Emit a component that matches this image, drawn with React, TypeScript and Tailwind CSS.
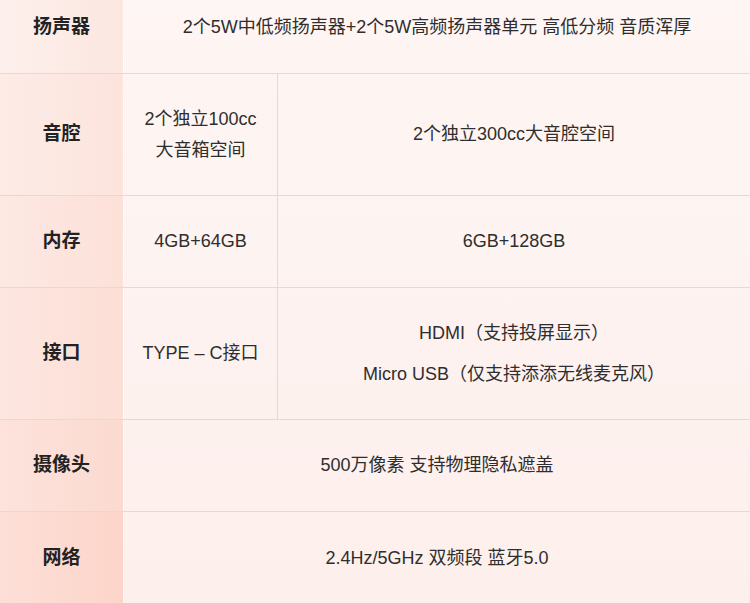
const font = { fontFamily: '"Liberation Sans", "Noto Sans CJK SC", sans-serif' };

function Label({ text, bg }: { text: string; bg: string }) {
  return (
    <div className={`flex items-center justify-center border-r border-r-white/70 text-[19px] font-bold text-[#222] ${bg}`}>
      {text}
    </div>
  );
}

export default function App() {
  return (
    <div className="h-[603px] w-[750px] overflow-hidden bg-gradient-to-b from-[#fef6f4] to-[#fdefec] text-[#2e2e2e]" style={font}>
      <div className="-mt-[19px] flex flex-col">
        {/* 扬声器 */}
        <div className="grid h-[93px] grid-cols-[124px_1fr] border-b border-[#e8d8cf]">
          <Label text="扬声器" bg="bg-gradient-to-r from-[#fdf0ec] to-[#fce6e0]" />
          <div className="flex items-center justify-center text-[18px]">
            2个5W中低频扬声器+2个5W高频扬声器单元 高低分频 音质浑厚
          </div>
        </div>

        {/* 音腔 */}
        <div className="grid h-[122px] grid-cols-[124px_154px_1fr] border-b border-[#e8d8cf]">
          <Label text="音腔" bg="bg-gradient-to-r from-[#fdebe6] to-[#fce4dd]" />
          <div className="flex flex-col items-center justify-center border-r border-[#e8d8cf] text-[18px] leading-[31px]">
            <span>2个独立100cc</span>
            <span>大音箱空间</span>
          </div>
          <div className="flex items-center justify-center text-[18px]">2个独立300cc大音腔空间</div>
        </div>

        {/* 内存 */}
        <div className="grid h-[92px] grid-cols-[124px_154px_1fr] border-b border-[#e8d8cf]">
          <Label text="内存" bg="bg-gradient-to-r from-[#fde8e2] to-[#fce1d9]" />
          <div className="flex items-center justify-center border-r border-[#e8d8cf] text-[18px]">4GB+64GB</div>
          <div className="flex items-center justify-center text-[18px]">6GB+128GB</div>
        </div>

        {/* 接口 */}
        <div className="grid h-[132px] grid-cols-[124px_154px_1fr] border-b border-[#e8d8cf]">
          <Label text="接口" bg="bg-gradient-to-r from-[#fde6e0] to-[#fcdfd6]" />
          <div className="flex items-center justify-center border-r border-[#e8d8cf] text-[18px]">TYPE – C接口</div>
          <div className="flex flex-col items-center justify-center gap-[15px] text-[18px] leading-[26px]">
            <span>HDMI（支持投屏显示）</span>
            <span>Micro USB（仅支持添添无线麦克风）</span>
          </div>
        </div>

        {/* 摄像头 */}
        <div className="grid h-[92px] grid-cols-[124px_1fr] border-b border-[#e8d8cf]">
          <Label text="摄像头" bg="bg-gradient-to-r from-[#fde3dc] to-[#fbdad0]" />
          <div className="flex items-center justify-center text-[18px]">500万像素 支持物理隐私遮盖</div>
        </div>

        {/* 网络 */}
        <div className="grid h-[92px] grid-cols-[124px_1fr]">
          <Label text="网络" bg="bg-gradient-to-r from-[#fddfd7] to-[#fcd5ca]" />
          <div className="flex items-center justify-center text-[18px]">2.4Hz/5GHz 双频段 蓝牙5.0</div>
        </div>
      </div>
    </div>
  );
}
